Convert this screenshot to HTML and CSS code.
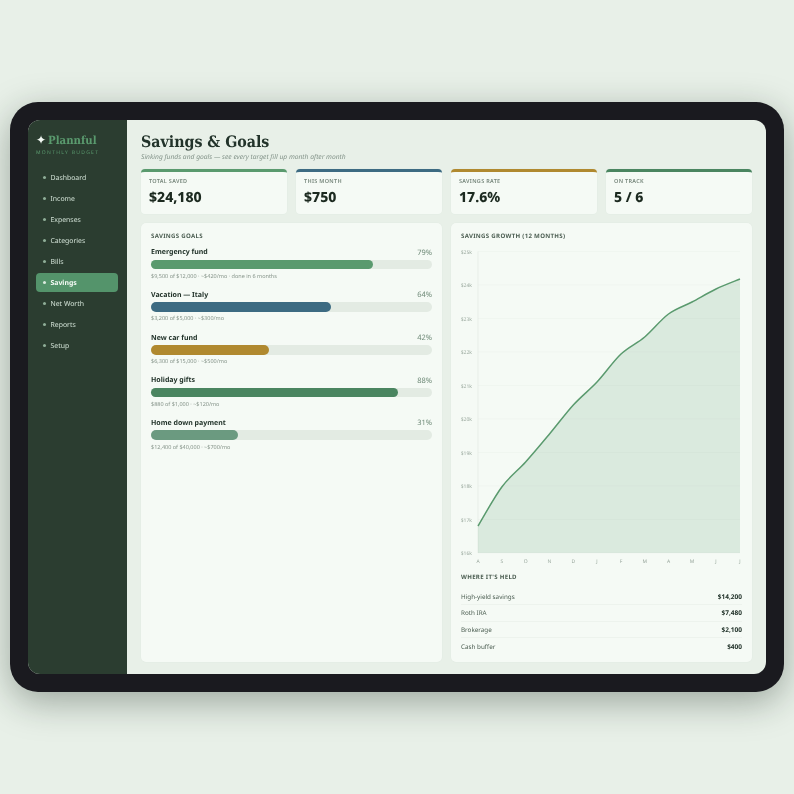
FILE: index.html
```html
<!DOCTYPE html>
<html>
<head>
  <meta charset="utf-8">
  <title>Plannful - Savings</title>
  <link rel="stylesheet" href="styles.css">
</head>
<body>
  <div class="device">
    <div class="screen">
      <aside class="sidebar">
        <div class="brand"><span class="brand-star">✦</span><span>Plannful</span></div>
        <div class="brand-sub">MONTHLY BUDGET</div>
        <nav class="nav">
          <a class="nav-item">Dashboard</a>
          <a class="nav-item">Income</a>
          <a class="nav-item">Expenses</a>
          <a class="nav-item">Categories</a>
          <a class="nav-item">Bills</a>
          <a class="nav-item active">Savings</a>
          <a class="nav-item">Net Worth</a>
          <a class="nav-item">Reports</a>
          <a class="nav-item">Setup</a>
        </nav>
      </aside>
      <main class="main">
        <h1 class="title">Savings &amp; Goals</h1>
        <p class="subtitle">Sinking funds and goals — see every target fill up month after month</p>

        <div class="stats">
          <div class="stat top-green">
            <div class="stat-label">TOTAL SAVED</div>
            <div class="stat-value">$24,180</div>
          </div>
          <div class="stat top-blue">
            <div class="stat-label">THIS MONTH</div>
            <div class="stat-value">$750</div>
          </div>
          <div class="stat top-gold">
            <div class="stat-label">SAVINGS RATE</div>
            <div class="stat-value">17.6%</div>
          </div>
          <div class="stat top-dark">
            <div class="stat-label">ON TRACK</div>
            <div class="stat-value">5 / 6</div>
          </div>
        </div>

        <div class="panels">
          <section class="panel">
            <h2 class="panel-title goals-title">SAVINGS GOALS</h2>
            <div class="goal">
              <div class="goal-head"><span class="goal-name">Emergency fund</span><span class="goal-pct">79%</span></div>
              <div class="track"><div class="fill fill-green" style="width:79%"></div></div>
              <div class="goal-meta">$9,500 of $12,000 · ~$420/mo · done in 6 months</div>
            </div>
            <div class="goal">
              <div class="goal-head"><span class="goal-name">Vacation — Italy</span><span class="goal-pct">64%</span></div>
              <div class="track"><div class="fill fill-blue" style="width:64%"></div></div>
              <div class="goal-meta">$3,200 of $5,000 · ~$300/mo</div>
            </div>
            <div class="goal">
              <div class="goal-head"><span class="goal-name">New car fund</span><span class="goal-pct">42%</span></div>
              <div class="track"><div class="fill fill-gold" style="width:42%"></div></div>
              <div class="goal-meta">$6,300 of $15,000 · ~$500/mo</div>
            </div>
            <div class="goal">
              <div class="goal-head"><span class="goal-name">Holiday gifts</span><span class="goal-pct">88%</span></div>
              <div class="track"><div class="fill fill-dark" style="width:88%"></div></div>
              <div class="goal-meta">$880 of $1,000 · ~$120/mo</div>
            </div>
            <div class="goal">
              <div class="goal-head"><span class="goal-name">Home down payment</span><span class="goal-pct">31%</span></div>
              <div class="track"><div class="fill fill-sage" style="width:31%"></div></div>
              <div class="goal-meta">$12,400 of $40,000 · ~$700/mo</div>
            </div>
          </section>

          <section class="panel">
            <h2 class="panel-title">SAVINGS GROWTH (12 MONTHS)</h2>
            <svg class="chart" width="281" height="322" viewBox="0 0 281 322">
              <g class="grid">
                <line x1="17" x2="279" y1="5.5" y2="5.5"/>
                <line x1="17" x2="279" y1="39" y2="39"/>
                <line x1="17" x2="279" y1="72.5" y2="72.5"/>
                <line x1="17" x2="279" y1="106" y2="106"/>
                <line x1="17" x2="279" y1="139.5" y2="139.5"/>
                <line x1="17" x2="279" y1="173" y2="173"/>
                <line x1="17" x2="279" y1="206.5" y2="206.5"/>
                <line x1="17" x2="279" y1="240" y2="240"/>
                <line x1="17" x2="279" y1="273.5" y2="273.5"/>
                <line x1="17" x2="279" y1="307" y2="307"/>
                <line class="axis" x1="17" x2="17" y1="5.5" y2="307"/>
              </g>
              <path class="area" d="M17 280C21 273.5 32.9 251.7 40.8 241C48.7 230.3 56.7 224.8 64.6 216C72.6 207.2 80.6 197.5 88.5 188C96.5 178.5 104.4 167.7 112.3 159C120.2 150.3 128 144.5 136 136C144 127.5 152 115.5 160 108C168 100.5 175.8 97.7 183.7 91C191.6 84.3 199.6 73.8 207.5 68C215.4 62.2 223.1 60.2 231 56C238.9 51.8 247 46.8 255 43C263 39.2 275 34.7 279 33L279 307L17 307Z"/>
              <path class="line" d="M17 280C21 273.5 32.9 251.7 40.8 241C48.7 230.3 56.7 224.8 64.6 216C72.6 207.2 80.6 197.5 88.5 188C96.5 178.5 104.4 167.7 112.3 159C120.2 150.3 128 144.5 136 136C144 127.5 152 115.5 160 108C168 100.5 175.8 97.7 183.7 91C191.6 84.3 199.6 73.8 207.5 68C215.4 62.2 223.1 60.2 231 56C238.9 51.8 247 46.8 255 43C263 39.2 275 34.7 279 33"/>
              <g class="y-labels">
                <text x="11" y="7.5">$25k</text>
                <text x="11" y="41">$24k</text>
                <text x="11" y="74.5">$23k</text>
                <text x="11" y="108">$22k</text>
                <text x="11" y="141.5">$21k</text>
                <text x="11" y="175">$20k</text>
                <text x="11" y="208.5">$19k</text>
                <text x="11" y="242">$18k</text>
                <text x="11" y="275.5">$17k</text>
                <text x="11" y="309">$16k</text>
              </g>
              <g class="x-labels">
                <text x="17" y="317">A</text>
                <text x="40.8" y="317">S</text>
                <text x="64.6" y="317">O</text>
                <text x="88.5" y="317">N</text>
                <text x="112.3" y="317">D</text>
                <text x="136" y="317">J</text>
                <text x="160" y="317">F</text>
                <text x="183.7" y="317">M</text>
                <text x="207.5" y="317">A</text>
                <text x="231" y="317">M</text>
                <text x="255" y="317">J</text>
                <text x="279" y="317">J</text>
              </g>
            </svg>
            <h2 class="panel-title held-title">WHERE IT'S HELD</h2>
            <div class="held-row"><span>High-yield savings</span><b>$14,200</b></div>
            <div class="held-row"><span>Roth IRA</span><b>$7,480</b></div>
            <div class="held-row"><span>Brokerage</span><b>$2,100</b></div>
            <div class="held-row"><span>Cash buffer</span><b>$400</b></div>
          </section>
        </div>
      </main>
    </div>
  </div>
</body>
</html>
```

FILE: styles.css
```css
* {
  box-sizing: border-box;
}
html, body {
  height: 100%;
}
body {
  margin: 0;
  display: flex;
  align-items: center;
  justify-content: center;
  background: #e8f0e8;
  font-family: "Noto Sans", "Liberation Sans", sans-serif;
  color: #1c2a20;
  text-rendering: geometricPrecision;
}

.device {
  width: 774px;
  height: 590px;
  padding: 18px;
  background: #1a1a1f;
  border-radius: 28px;
  box-shadow: 0 10px 36px rgba(20, 35, 25, 0.36);
}
.screen {
  display: flex;
  height: 100%;
  border-radius: 12px;
  overflow: hidden;
  background: #e8f0e8;
  filter: blur(0.25px);
}

/* sidebar */
.sidebar {
  width: 99px;
  flex: none;
  padding: 12px 9px 12px 8px;
  background: #2b3d30;
}
.brand {
  display: flex;
  align-items: center;
  gap: 2px;
  font-family: "DejaVu Serif Condensed", "DejaVu Serif", serif;
  font-weight: bold;
  font-size: 11.3px;
  line-height: 16px;
  color: #5a9a6e;
}
.brand-star {
  font-family: "DejaVu Sans", sans-serif;
  font-size: 12px;
  color: #f4faf5;
}
.brand-sub {
  margin-top: 1px;
  font-size: 5px;
  line-height: 8px;
  letter-spacing: 1.3px;
  color: #5a9a6e;
}
.nav {
  display: flex;
  flex-direction: column;
  gap: 2px;
  margin-top: 10.5px;
}
.nav-item {
  display: flex;
  align-items: center;
  height: 19.05px;
  padding: 2px 0 0 14.5px;
  position: relative;
  border-radius: 4px;
  font-size: 6.9px;
  color: #d0e0d4;
}
.nav-item::before {
  content: "";
  position: absolute;
  left: 6.5px;
  top: 8px;
  width: 3px;
  height: 3px;
  border-radius: 50%;
  background: #8fae98;
}
.nav-item.active {
  background: #54946b;
  color: #f4faf5;
  font-weight: 700;
}
.nav-item.active::before {
  background: #dcebdf;
}

/* main */
.main {
  flex: 1;
  display: flex;
  flex-direction: column;
  padding: 11px 14px 13px;
}
.title {
  margin: 0;
  font-family: "DejaVu Serif Condensed", "DejaVu Serif", serif;
  font-size: 15.8px;
  line-height: 21px;
  color: #22332a;
}
.subtitle {
  margin: -1px 0 0;
  font-size: 6.7px;
  line-height: 11px;
  font-style: italic;
  color: #84948a;
}

.stats {
  display: grid;
  grid-template-columns: repeat(4, 1fr);
  gap: 9px;
  margin-top: 7px;
}
.stat {
  height: 44.5px;
  padding: 5px 8px;
  background: #f5faf5;
  border-radius: 4px;
  border-top: 3px solid;
  box-shadow: 0 0 0 0.5px #e2ebe3;
}
.top-green { border-top-color: #5a9a6e; }
.top-blue { border-top-color: #3d6b82; }
.top-gold { border-top-color: #b0892f; }
.top-dark { border-top-color: #4a8560; }
.stat-label {
  font-size: 5.5px;
  line-height: 8px;
  font-weight: 600;
  letter-spacing: 0.3px;
  color: #77877c;
}
.stat-value {
  margin-top: 4px;
  font-size: 14px;
  line-height: 18px;
  font-weight: 800;
  color: #1c2a20;
}

.panels {
  flex: 1;
  display: grid;
  grid-template-columns: 1fr 1fr;
  gap: 9px;
  margin-top: 9px;
}
.panel {
  padding: 8px 10px;
  background: #f5faf5;
  border-radius: 5px;
  box-shadow: 0 0 0 0.5px #e2ebe3;
}
.panel-title {
  margin: 0;
  font-size: 6.1px;
  line-height: 9px;
  font-weight: 700;
  letter-spacing: 0.3px;
  color: #4d5f53;
}
.goals-title {
  margin-bottom: 0.5px;
}

/* goals */
.goal {
  margin-top: 6.2px;
  height: 36.5px;
}
.goal-head {
  display: flex;
  justify-content: space-between;
  height: 12px;
  line-height: 12px;
}
.goal-name {
  padding-top: 1.5px;
  font-size: 7px;
  font-weight: 700;
  color: #22332a;
}
.goal-pct {
  padding-top: 1px;
  font-size: 7.5px;
  color: #6f8a78;
}
.track {
  height: 9.6px;
  margin-top: 2px;
  background: #e3ebe3;
  border-radius: 5px;
}
.fill {
  height: 100%;
  border-radius: 5px;
}
.fill-green { background: #5a9a6e; }
.fill-blue { background: #3d6b82; }
.fill-gold { background: #b0892f; }
.fill-dark { background: #4a8560; }
.fill-sage { background: #6b9a80; }
.goal-meta {
  margin-top: 2.5px;
  font-size: 5.5px;
  line-height: 8px;
  color: #87958b;
}

/* chart */
.chart {
  display: block;
  margin-top: 6px;
}
.grid line {
  stroke: #edf3ed;
  stroke-width: 0.6;
}
.grid .axis {
  stroke: #dfe7df;
}
.area {
  fill: #5a9a6e;
  fill-opacity: 0.17;
}
.line {
  fill: none;
  stroke: #5a9a6e;
  stroke-width: 1.5;
}
.y-labels text, .x-labels text {
  font-size: 5px;
  fill: #9aa89e;
}
.y-labels text {
  text-anchor: end;
}
.x-labels text {
  text-anchor: middle;
}

/* where it's held */
.held-title {
  margin-top: 4.5px;
  margin-bottom: 7.8px;
}
.held-row {
  display: flex;
  justify-content: space-between;
  align-items: center;
  height: 16.4px;
  border-bottom: 0.5px solid #edf3ed;
  font-size: 6.3px;
  color: #4d5f53;
}
.held-row:last-child {
  border-bottom: 0;
}
.held-row b {
  font-size: 6.5px;
  color: #22332a;
}
```
